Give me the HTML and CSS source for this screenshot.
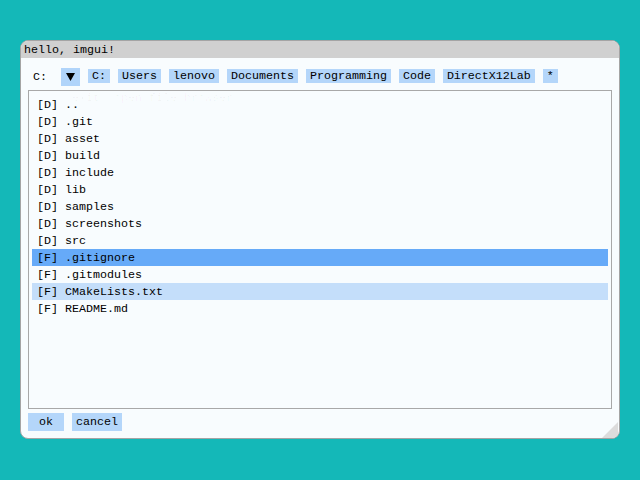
FILE: index.html
```html
<!DOCTYPE html>
<html>
<head>
<meta charset="utf-8">
<link rel="stylesheet" href="styles.css">
</head>
<body>
<div class="window">
  <div class="titlebar">hello, imgui!</div>
  <div class="content">
    <div class="pathrow">
      <div class="combo">
        <span class="combo-preview">C:</span>
        <span class="combo-arrow"><svg width="9" height="8" viewBox="0 0 9 8"><polygon points="0,0 9,0 4.5,8" fill="#000"/></svg></span>
      </div>
      <span class="btn">C:</span>
      <span class="btn">Users</span>
      <span class="btn">lenovo</span>
      <span class="btn">Documents</span>
      <span class="btn">Programming</span>
      <span class="btn">Code</span>
      <span class="btn">DirectX12Lab</span>
      <span class="btn">*</span>
    </div>
    <div class="list">
      <div class="ghost">exit  open file browser</div>
      <div class="row">[D] ..</div>
      <div class="row">[D] .git</div>
      <div class="row">[D] asset</div>
      <div class="row">[D] build</div>
      <div class="row">[D] include</div>
      <div class="row">[D] lib</div>
      <div class="row">[D] samples</div>
      <div class="row">[D] screenshots</div>
      <div class="row">[D] src</div>
      <div class="row selected">[F] .gitignore</div>
      <div class="row">[F] .gitmodules</div>
      <div class="row hovered">[F] CMakeLists.txt</div>
      <div class="row">[F] README.md</div>
    </div>
    <div class="actions">
      <span class="btn big ok">ok</span>
      <span class="btn big">cancel</span>
    </div>
  </div>
  <div class="grip"></div>
</div>
</body>
</html>
```

FILE: styles.css
```css
html, body {
  margin: 0;
  padding: 0;
}
body {
  background: #14b8b8;
  width: 640px;
  height: 480px;
  padding-top: 40px;
  box-sizing: border-box;
  font-family: "Liberation Mono", "DejaVu Sans Mono", monospace;
  font-size: 11.67px;
  color: #000;
}
.window {
  position: relative;
  margin-left: 20px;
  width: 600px;
  height: 399px;
  box-sizing: border-box;
  border: 1px solid #a4a4a4;
  border-radius: 8px;
  overflow: hidden;
  background: #f8fcfe;
  display: flex;
  flex-direction: column;
}
.titlebar {
  height: 17px;
  line-height: 18px;
  background: #d0d0d0;
  padding-left: 3px;
  white-space: pre;
}
.content {
  padding: 10px 7px 0 7px;
  display: flex;
  flex-direction: column;
}
.pathrow {
  display: flex;
  align-items: flex-start;
  gap: 8px;
  height: 18px;
}
.combo {
  display: flex;
  height: 18px;
}
.combo-preview {
  width: 28px;
  padding-left: 5px;
  line-height: 18px;
}
.combo-arrow {
  width: 19px;
  height: 18px;
  background: #b0d4fa;
  display: flex;
  align-items: center;
  justify-content: center;
}
.btn {
  display: inline-block;
  background: #b4d6fa;
  height: 14px;
  line-height: 15px;
  padding: 0 4px;
  margin-top: 1px;
  white-space: pre;
}
.list {
  position: relative;
  margin-top: 4px;
  height: 319px;
  box-sizing: border-box;
  border: 1px solid #a8a8a8;
  padding: 5px 3px;
}
.ghost {
  position: absolute;
  left: 43px;
  top: 0px;
  line-height: 14px;
  color: rgba(0, 0, 0, 0.035);
  white-space: pre;
}
.row {
  position: relative;
  height: 17px;
  line-height: 18px;
  padding-left: 5px;
  white-space: pre;
}
.row.selected {
  background: #66aaf8;
}
.row.hovered {
  background: #c4defa;
}
.actions {
  display: flex;
  gap: 8px;
  margin-top: 4px;
}
.btn.big {
  height: 18px;
  line-height: 19px;
  margin-top: 0;
}
.btn.ok {
  width: 28px;
  text-align: center;
}
.grip {
  position: absolute;
  right: 1px;
  bottom: 0;
  width: 0;
  height: 0;
  border-left: 16px solid transparent;
  border-bottom: 16px solid #dcdcdc;
}
```
